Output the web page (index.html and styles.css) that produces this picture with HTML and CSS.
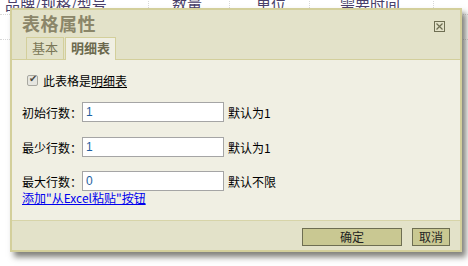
FILE: index.html
```html
<!DOCTYPE html>
<html>
<head>
<meta charset="utf-8">
<link rel="stylesheet" href="styles.css">
</head>
<body>
<div class="page">
  <div class="thead">
    <div class="th th1">品牌/规格/型号</div>
    <div class="th th2">数量</div>
    <div class="th th3">单位</div>
    <div class="th th4">需要时间</div>
    <div class="th th5"></div>
  </div>
  <div class="hline h1"></div>
  <div class="hline h2"></div>
</div>
<div class="dialog">
  <div class="head">
    <div class="title">表格属性</div>
    <div class="close"><svg width="11" height="11" viewBox="0 0 11 11"><rect x="0.5" y="0.5" width="10" height="10" fill="none" stroke="#6e6e52"/><path d="M2.5 2.5 L8.5 8.5 M8.5 2.5 L2.5 8.5" stroke="#6e6e52" stroke-width="1.2"/></svg></div>
    <div class="tabs">
      <div class="tab">基本</div>
      <div class="tab active">明细表</div>
    </div>
  </div>
  <div class="body">
    <label class="check"><input type="checkbox" checked> 此表格是<u>明细表</u></label>
    <div class="row"><span class="lbl">初始行数：</span><input class="inp" type="text" value="1"><span class="hint">默认为1</span></div>
    <div class="row"><span class="lbl">最少行数：</span><input class="inp" type="text" value="1"><span class="hint">默认为1</span></div>
    <div class="row r3"><span class="lbl">最大行数：</span><input class="inp" type="text" value="0"><span class="hint">默认不限</span></div>
    <a class="link" href="#">添加"从Excel粘贴"按钮</a>
  </div>
  <div class="foot">
    <button class="btn ok">确定</button>
    <button class="btn cancel">取消</button>
  </div>
</div>
</body>
</html>
```
FILE: styles.css
```css
html, body {
  margin: 0;
  padding: 0;
  background: #fff;
  width: 468px;
  height: 266px;
  overflow: hidden;
  font-family: "Noto Sans CJK SC", "Liberation Sans", sans-serif;
}
.page {
  position: relative;
  width: 468px;
  height: 266px;
}
.thead {
  display: flex;
  height: 20px;
  margin-top: -6px;
}
.th {
  font-size: 15px;
  line-height: 20px;
  color: #4a3f6a;
  border-right: 1px dotted #d8d8d8;
  box-sizing: border-box;
}
.th1 { width: 149px; padding-left: 5px; }
.th2 { width: 81px; padding-left: 23px; }
.th3 { width: 80px; padding-left: 26px; }
.th4 { width: 124px; padding-left: 30px; }
.th5 { flex: 1; border-right: none; }
.hline {
  position: absolute;
  left: 0;
  width: 468px;
  border-top: 1px dotted #d8d8d8;
}
.h1 { top: 20px; }
.h2 { top: 45px; }

.dialog {
  position: absolute;
  left: 10px;
  top: 8px;
  width: 448px;
  height: 240px;
  border: 2px solid #d3cf9b;
  background: #e3e2c9;
  box-shadow: 4px 5px 6px rgba(60, 60, 50, 0.65);
  display: flex;
  flex-direction: column;
}
.head {
  position: relative;
  height: 49px;
  border-bottom: 1px solid #d3cf9b;
  display: flex;
  flex-direction: column;
}
.title {
  height: 28px;
  line-height: 26px;
  padding-left: 10px;
  font-size: 18px;
  font-weight: bold;
  color: #8b8669;
  letter-spacing: 0.5px;
}
.close {
  position: absolute;
  right: 15px;
  top: 11px;
  width: 11px;
  height: 11px;
  line-height: 0;
}
.tabs {
  display: flex;
  gap: 1px;
  margin-left: 14px;
  margin-top: auto;
}
.tab {
  height: 21px;
  line-height: 20px;
  padding: 0 5px;
  font-size: 13px;
  color: #7a7656;
  border: 1px solid #d3cf9b;
  border-bottom: none;
  background: #e3e2c9;
}
.tab.active {
  background: #f0efe3;
  font-weight: bold;
  color: #6c6a4e;
  height: 22px;
  margin-bottom: -1px;
  position: relative;
}
.body {
  flex: 1;
  background: #f0efe3;
  padding: 12px 10px 0 10px;
  font-size: 12px;
  color: #000;
}
.check {
  display: flex;
  align-items: center;
  height: 16px;
  padding-left: 5px;
}
.check input {
  appearance: none;
  -webkit-appearance: none;
  margin: 0 5px 0 0;
  width: 11px;
  height: 11px;
  border: 1px solid #a8a8a0;
  border-radius: 2px;
  background: #e6e6e0;
  position: relative;
}
.check input::after {
  content: "✔";
  position: absolute;
  left: 1px;
  top: -3px;
  font-size: 10px;
  color: #4a4a40;
  font-family: "DejaVu Sans", sans-serif;
}
.row {
  display: flex;
  align-items: center;
  margin-top: 14px;
  height: 20px;
}
.row + .row { margin-top: 15px; }
.row.r3 { margin-top: 14px; }
.lbl {
  width: 60px;
}
.inp {
  width: 142px;
  height: 20px;
  box-sizing: border-box;
  border: 1px solid #a5a5a5;
  padding: 0 3px;
  font-size: 12px;
  font-family: "Liberation Sans", sans-serif;
  color: #1f5fa0;
  background: #fff;
  margin: 0;
}
.hint {
  margin-left: 4px;
}
.link {
  display: block;
  color: #0000ee;
  font-size: 12px;
  line-height: 14px;
  margin-top: 0;
}
.foot {
  height: 30px;
  border-top: 1px solid #d7d4a8;
  background: #e3e2c9;
  display: flex;
  justify-content: flex-end;
  align-items: flex-start;
  padding-top: 7px;
  padding-right: 10px;
  gap: 10px;
  box-sizing: border-box;
}
.btn {
  height: 18px;
  margin: 0;
  padding: 0;
  border: 1px solid #6e6e52;
  background: #c9c892;
  font-size: 12px;
  line-height: 16px;
  color: #222;
  font-family: "Noto Sans CJK SC", sans-serif;
}
.btn.ok { width: 100px; }
.btn.cancel { width: 38px; }
```
